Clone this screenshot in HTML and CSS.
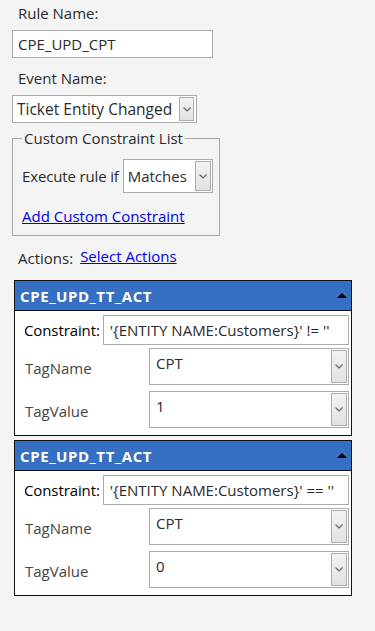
FILE: index.html
```html
<!DOCTYPE html>
<html>
<head>
    <title>Rule Editor</title>
    <link rel="stylesheet" href="styles.css">
</head>
<body>
<div class="page">
    <div class="field-label rule-label">Rule Name:</div>
    <input class="text-box rule-name" type="text" value="CPE_UPD_CPT">

    <div class="field-label event-label">Event Name:</div>
    <div class="combo event-combo">
        <span class="combo-text">Ticket Entity Changed</span>
        <span class="combo-btn"><svg width="8" height="5" viewBox="0 0 8 5"><polyline points="0.5,0.5 4,4 7.5,0.5" fill="none" stroke="#666" stroke-width="1.2"/></svg></span>
    </div>

    <!--custom constraints-->
    <fieldset class="constraints">
        <legend>Custom Constraint List</legend>
        <div class="execute-row">
            <span class="execute-label">Execute rule if</span>
            <div class="combo match-combo">
                <span class="combo-text">Matches</span>
                <span class="combo-btn"><svg width="8" height="5" viewBox="0 0 8 5"><polyline points="0.5,0.5 4,4 7.5,0.5" fill="none" stroke="#666" stroke-width="1.2"/></svg></span>
            </div>
        </div>
        <a href="#" class="link add-link">Add Custom Constraint</a>
    </fieldset>

    <div class="actions-row">
        <span class="actions-label">Actions:</span>
        <a href="#" class="link">Select Actions</a>
    </div>

    <!--action panels-->
    <div class="action-panel">
        <div class="panel-head">
            <span>CPE_UPD_TT_ACT</span>
            <svg width="10" height="5" viewBox="0 0 10 5"><polygon points="0,5 5,0 10,5" fill="#000"/></svg>
        </div>
        <div class="panel-body">
            <div class="constraint-row">
                <span class="constraint-label">Constraint:</span>
                <input class="text-box constraint-box" type="text" value="'{ENTITY NAME:Customers}' != ''">
            </div>
            <div class="tag-row">
                <span class="tag-label">TagName</span>
                <div class="combo tag-combo">
                    <span class="combo-text">CPT</span>
                    <span class="combo-btn"><svg width="8" height="5" viewBox="0 0 8 5"><polyline points="0.5,0.5 4,4 7.5,0.5" fill="none" stroke="#666" stroke-width="1.2"/></svg></span>
                </div>
            </div>
            <div class="tag-row">
                <span class="tag-label">TagValue</span>
                <div class="combo tag-combo">
                    <span class="combo-text">1</span>
                    <span class="combo-btn"><svg width="8" height="5" viewBox="0 0 8 5"><polyline points="0.5,0.5 4,4 7.5,0.5" fill="none" stroke="#666" stroke-width="1.2"/></svg></span>
                </div>
            </div>
        </div>
    </div>

    <div class="action-panel">
        <div class="panel-head">
            <span>CPE_UPD_TT_ACT</span>
            <svg width="10" height="5" viewBox="0 0 10 5"><polygon points="0,5 5,0 10,5" fill="#000"/></svg>
        </div>
        <div class="panel-body">
            <div class="constraint-row">
                <span class="constraint-label">Constraint:</span>
                <input class="text-box constraint-box" type="text" value="'{ENTITY NAME:Customers}' == ''">
            </div>
            <div class="tag-row">
                <span class="tag-label">TagName</span>
                <div class="combo tag-combo">
                    <span class="combo-text">CPT</span>
                    <span class="combo-btn"><svg width="8" height="5" viewBox="0 0 8 5"><polyline points="0.5,0.5 4,4 7.5,0.5" fill="none" stroke="#666" stroke-width="1.2"/></svg></span>
                </div>
            </div>
            <div class="tag-row">
                <span class="tag-label">TagValue</span>
                <div class="combo tag-combo">
                    <span class="combo-text">0</span>
                    <span class="combo-btn"><svg width="8" height="5" viewBox="0 0 8 5"><polyline points="0.5,0.5 4,4 7.5,0.5" fill="none" stroke="#666" stroke-width="1.2"/></svg></span>
                </div>
            </div>
        </div>
    </div>
</div>
</body>
</html>
```

FILE: styles.css
```css
/* page */
body {
    margin: 0;
    background-color: #f4f4f4;
    font-family: "Open Sans", sans-serif;
    font-size: 15px;
    line-height: 20px;
    color: #2b2b2b;
}

.page {
    padding: 3px 0 20px 12px;
}

.field-label {
    padding-left: 6px;
}

.rule-label {
    margin-bottom: 7px;
}

.event-label {
    margin-top: 10px;
    margin-bottom: 7px;
}

/* text boxes */
.text-box {
    display: block;
    box-sizing: border-box;
    margin: 0;
    border: 1px solid #ababab;
    background: #ffffff;
    font-family: "Open Sans", sans-serif;
    font-size: 15px;
    color: #2b2b2b;
    outline: none;
}

.rule-name {
    width: 201px;
    height: 28px;
    padding: 0 5px;
}

/* dropdowns */
.combo {
    display: flex;
    box-sizing: border-box;
    border: 1px solid #ababab;
    background: #ffffff;
    padding: 1px;
}

.combo-text {
    flex: 1;
    display: flex;
    align-items: center;
    padding: 0 3px;
    white-space: nowrap;
    overflow: hidden;
}

.combo-btn {
    width: 16px;
    box-sizing: border-box;
    border: 1px solid #adadad;
    background: linear-gradient(#f3f3f3, #e1e1e1);
    display: flex;
    align-items: center;
    justify-content: center;
}

.event-combo {
    width: 185px;
    height: 28px;
    font-size: 15.5px;
}

.event-combo .combo-btn {
    width: 15px;
    margin-right: 1px;
}

/* constraint list */
.constraints {
    width: 208px;
    min-width: 0;
    box-sizing: border-box;
    margin: 5px 0 0 0;
    padding: 0 5px 9px 9px;
    border: 1px solid #a8a8a8;
}

.constraints legend {
    padding: 0 2px;
}

.execute-row {
    display: flex;
    align-items: center;
    gap: 4px;
    margin-top: 11px;
}

.execute-label {
    white-space: nowrap;
    letter-spacing: -0.15px;
}

.match-combo {
    width: 90px;
    height: 34px;
    flex-shrink: 0;
}

.link {
    color: #0000ee;
    text-decoration: underline;
}

.add-link {
    display: block;
    margin-top: 13px;
}

.actions-row {
    display: flex;
    align-items: flex-start;
    gap: 7px;
    margin-top: 10px;
    padding-left: 6px;
}

.actions-label {
    padding-top: 2px;
}

/* action panels */
.action-panel {
    width: 338px;
    box-sizing: border-box;
    margin: 12px 0 0 2px;
    border: 1px solid #111111;
}

.action-panel + .action-panel {
    margin-top: 4px;
}

.panel-head {
    height: 29px;
    display: flex;
    align-items: center;
    justify-content: space-between;
    padding: 0 4px 0 5px;
    background-color: #3670c2;
    border-bottom: 1px solid #111111;
    color: #ffffff;
    font-weight: bold;
    letter-spacing: 0.6px;
}

.panel-body {
    background-color: #ffffff;
    padding: 4px 2px 7px 9px;
}

.constraint-row {
    display: flex;
    align-items: center;
    gap: 3px;
}

.constraint-label {
    color: #000000;
    letter-spacing: -0.1px;
}

.constraint-box {
    flex: 1;
    min-width: 0;
    height: 30px;
    padding: 0 6px;
}

.tag-row {
    display: flex;
    align-items: center;
    margin-top: 3px;
}

.tag-row + .tag-row {
    margin-top: 6px;
}

.tag-label {
    width: 125px;
    padding-left: 1px;
    padding-top: 3px;
    box-sizing: border-box;
    color: #444444;
}

.tag-combo {
    flex: 1;
    height: 37px;
}

.tag-combo .combo-text {
    align-items: flex-start;
    padding: 3px 5px 0 5px;
}
```
